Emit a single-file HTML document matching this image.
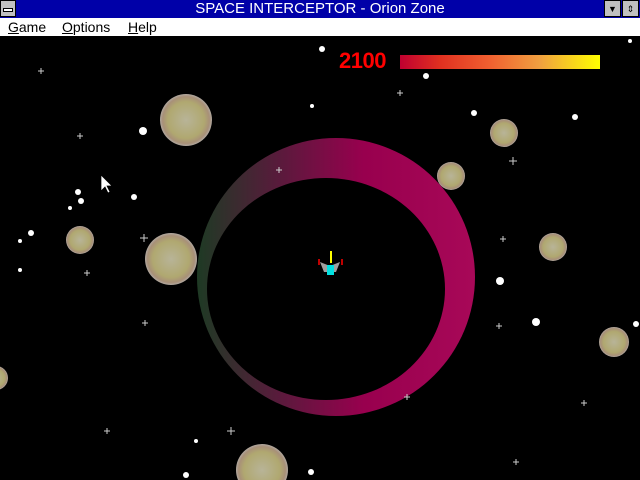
<!DOCTYPE html><html><head><style>
body{margin:0;width:640px;height:480px;overflow:hidden;background:#000;font-family:"Liberation Sans",sans-serif;position:relative}
.t{position:absolute;left:0;top:0;width:640px;height:18px;background:#0000a8;color:#fff;font-size:15px;text-align:center;line-height:18px}
.b{position:absolute;top:0;width:17px;height:17px;background:#c0c0c0;border:1px solid #000;box-sizing:border-box;font-size:9px;line-height:16px;text-align:center;color:#000}
.m{position:absolute;left:0;top:18px;width:640px;height:18px;background:#fff;border-bottom:1px solid #000;font-size:14px;line-height:18px}
.m span{position:absolute;top:0}
</style></head><body>
<div class="t">SPACE INTERCEPTOR - Orion Zone</div>
<div class="b" style="left:0;width:16px;border-color:#000"><div style="margin:7px 2px;height:2px;background:#fff;border:1px solid #000"></div></div>
<div class="b" style="left:604px">▼</div><div class="b" style="left:622px">⇕</div>
<div class="m"><span style="left:8px"><u>G</u>ame</span><span style="left:62px"><u>O</u>ptions</span><span style="left:128px"><u>H</u>elp</span></div>
<div style="position:absolute;left:339px;top:48px;color:#f00;font-size:22px;font-weight:bold;letter-spacing:-0.5px">2100</div>
<div style="position:absolute;left:400px;top:55px;width:200px;height:14px;background:linear-gradient(90deg,#c00030,#e03020 20%,#f06030 45%,#f0a040 70%,#ffff00)"></div>
<svg width="640" height="443" style="position:absolute;left:0;top:37px" viewBox="0 37 640 443">
<defs>
<linearGradient id="r" x1="0" x2="1"><stop offset="0" stop-color="#1e3a24"/><stop offset="0.3" stop-color="#5a1a3c"/><stop offset="0.6" stop-color="#98004e"/><stop offset="1" stop-color="#a80858"/></linearGradient>
<radialGradient id="a"><stop offset="0" stop-color="#b8b498"/><stop offset="0.7" stop-color="#b0a870"/><stop offset="0.9" stop-color="#a89078"/><stop offset="1" stop-color="#b0a8a0"/></radialGradient>
</defs>
<circle cx="336" cy="277" r="139" fill="url(#r)"/>
<ellipse cx="326" cy="289" rx="119" ry="111" fill="#000"/>
<g fill="url(#a)">
<circle cx="186" cy="120" r="26"/><circle cx="504" cy="133" r="14"/><circle cx="451" cy="176" r="14"/><circle cx="171" cy="259" r="26"/><circle cx="80" cy="240" r="14"/><circle cx="553" cy="247" r="14"/><circle cx="614" cy="342" r="15"/><circle cx="262" cy="470" r="26"/><circle cx="-4" cy="378" r="12"/>
</g>
<g fill="#fff">
<circle cx="322" cy="49" r="3"/><circle cx="143" cy="131" r="4"/><circle cx="134" cy="197" r="3"/><circle cx="78" cy="192" r="3"/><circle cx="81" cy="201" r="3"/><circle cx="70" cy="208" r="2"/><circle cx="31" cy="233" r="3"/><circle cx="20" cy="241" r="2"/><circle cx="20" cy="270" r="2"/><circle cx="312" cy="106" r="2"/><circle cx="474" cy="113" r="3"/><circle cx="426" cy="76" r="3"/><circle cx="575" cy="117" r="3"/><circle cx="500" cy="281" r="4"/><circle cx="536" cy="322" r="4"/><circle cx="636" cy="324" r="3"/><circle cx="186" cy="475" r="3"/><circle cx="311" cy="472" r="3"/><circle cx="196" cy="441" r="2"/><circle cx="630" cy="41" r="2"/>
</g>
<g stroke="#ccc" stroke-width="1">
<path d="M41 68v6M38 71h6M80 133v6M77 136h6M400 90v6M397 93h6M513 157v8M509 161h8M144 234v8M140 238h8M87 270v6M84 273h6M145 320v6M142 323h6M503 236v6M500 239h6M499 323v6M496 326h6M584 400v6M581 403h6M107 428v6M104 431h6M231 427v8M227 431h8M407 394v6M404 397h6M516 459v6M513 462h6M279 167v6M276 170h6"/>
</g>
<g>
<path d="M331 251v12" stroke="#ff0" stroke-width="2"/>
<path d="M320 262l10 4 10-4-4 10h-12z" fill="#a0a0a0"/>
<rect x="327" y="265" width="7" height="10" fill="#00e0e0"/>
<path d="M319 259v6M342 259v6" stroke="#f00" stroke-width="1.5"/>
</g>
<path d="M101 175v16l4-4 3 6 2-1-3-6h5z" fill="#fff" stroke="#000" stroke-width="0.7"/>
</svg>
</body></html>
